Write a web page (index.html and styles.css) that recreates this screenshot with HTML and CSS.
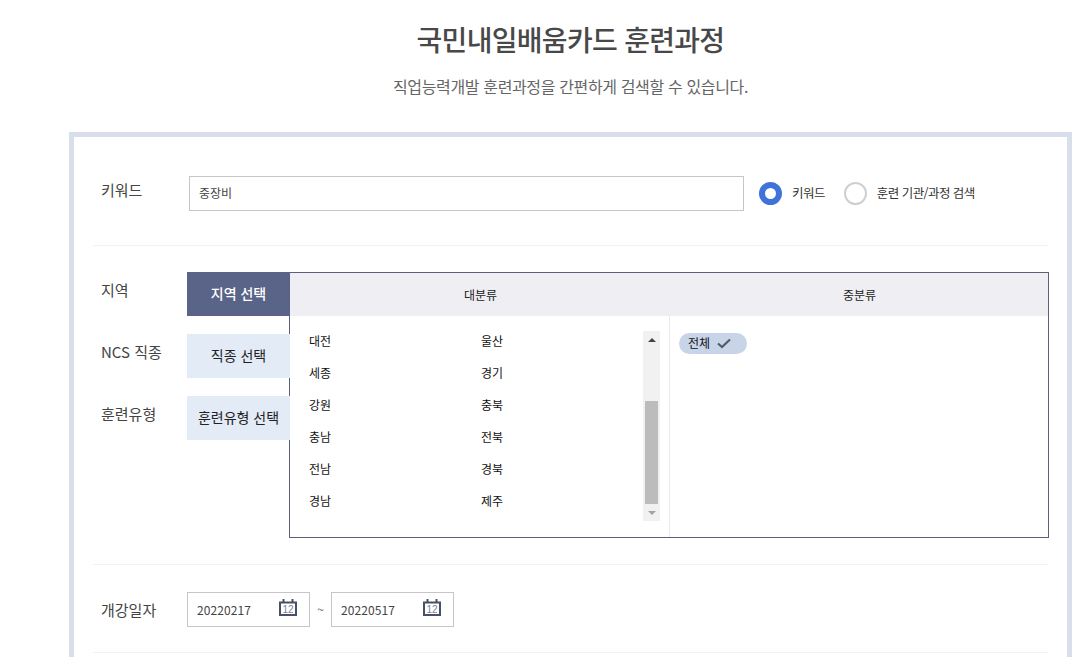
FILE: index.html
```html
<!DOCTYPE html>
<html lang="ko">
<head>
<meta charset="utf-8">
<title>국민내일배움카드 훈련과정</title>
<link rel="stylesheet" href="styles.css">
</head>
<body>
<header class="intro">
  <h1 class="title">국민내일배움카드 훈련과정</h1>
  <p class="subtitle">직업능력개발 훈련과정을 간편하게 검색할 수 있습니다.</p>
</header>
<main class="panel">
  <section class="row row-keyword">
    <div class="label">키워드</div>
    <input class="keyword-input" type="text" value="중장비">
    <div class="radio-group">
      <span class="radio radio-on"></span><span class="radio-text">키워드</span>
      <span class="radio radio-off"></span><span class="radio-text">훈련 기관/과정 검색</span>
    </div>
  </section>
  <section class="row row-select">
    <div class="select-labels">
      <div class="label">지역</div>
      <div class="label">NCS 직종</div>
      <div class="label">훈련유형</div>
    </div>
    <div class="tabs">
      <div class="tab tab-active">지역 선택</div>
      <div class="tab">직종 선택</div>
      <div class="tab">훈련유형 선택</div>
    </div>
    <div class="picker">
      <div class="picker-col picker-main">
        <div class="picker-head">대분류</div>
        <div class="picker-body">
          <ul class="region-list">
            <li>대전</li><li>울산</li>
            <li>세종</li><li>경기</li>
            <li>강원</li><li>충북</li>
            <li>충남</li><li>전북</li>
            <li>전남</li><li>경북</li>
            <li>경남</li><li>제주</li>
          </ul>
          <div class="scrollbar">
            <span class="arrow arrow-up"></span>
            <div class="scroll-track"><div class="scroll-thumb"></div></div>
            <span class="arrow arrow-down"></span>
          </div>
        </div>
      </div>
      <div class="picker-col picker-sub">
        <div class="picker-head">중분류</div>
        <div class="picker-body picker-body-sub">
          <span class="chip"><span class="chip-text">전체</span>
            <svg class="chip-check" width="14" height="11" viewBox="0 0 14 11"><path d="M1 5.5l4 3.5L13 1.5" fill="none" stroke="#555a66" stroke-width="2.2"/></svg>
          </span>
        </div>
      </div>
    </div>
  </section>
  <section class="row row-date">
    <div class="label">개강일자</div>
    <div class="date-field">
      <span class="date-text">20220217</span>
      <svg class="cal" width="18" height="18" viewBox="0 0 18 18"><path d="M4.5 0v3M13.5 0v3" stroke="#4a5064" stroke-width="2"/><path d="M1 3.5h16M1 2.5v13.5h16V2.5" fill="none" stroke="#4a5064" stroke-width="2"/><text x="9" y="13.5" text-anchor="middle" class="cal-num">12</text></svg>
    </div>
    <span class="tilde">~</span>
    <div class="date-field">
      <span class="date-text">20220517</span>
      <svg class="cal" width="18" height="18" viewBox="0 0 18 18"><path d="M4.5 0v3M13.5 0v3" stroke="#4a5064" stroke-width="2"/><path d="M1 3.5h16M1 2.5v13.5h16V2.5" fill="none" stroke="#4a5064" stroke-width="2"/><text x="9" y="13.5" text-anchor="middle" class="cal-num">12</text></svg>
    </div>
  </section>
</main>
</body>
</html>
```
FILE: styles.css
```css
* { box-sizing: border-box; }
html, body { height: 657px; }
body {
  margin: 0;
  background: #fff;
  color: #333;
  font-family: "Noto Sans CJK KR", "Noto Sans", sans-serif;
}
.intro { width: 1003px; height: 132px; margin-left: 69px; padding-top: 19px; text-align: center; }
.title { margin: 0; font-size: 28px; line-height: 40px; font-weight: 500; letter-spacing: -0.7px; color: #484848; }
.subtitle { margin: 16px 0 0; font-size: 16px; line-height: 22px; font-weight: 400; letter-spacing: -0.36px; color: #666; }
.panel {
  width: 1003px;
  height: 525px;
  margin-left: 69px;
  padding: 0 19px;
  border: 5px solid #d8dfea;
  border-bottom: 0;
  background: #fff;
}
.row { display: flex; border-bottom: 1px solid #f3f3f3; }
.label { padding-left: 8px; font-size: 15px; line-height: 22px; color: #444; }
.row-keyword { height: 109px; padding-top: 39px; align-items: flex-start; }
.row-keyword .label { width: 96px; margin-top: 3px; }
.keyword-input {
  width: 555px;
  height: 35px;
  padding: 0 9px 2px;
  border: 1px solid #c6c6c6;
  border-radius: 0;
  outline: none;
  font: 400 12px "Noto Sans CJK KR", sans-serif;
  color: #444;
}
.radio-group { display: flex; align-items: center; height: 35px; margin-left: 15px; }
.radio { width: 23px; height: 23px; border-radius: 50%; background: #fff; }
.radio-on { border: 6px solid #3f73d9; }
.radio-off { border: 2px solid #cfcfcf; margin-left: 19px; }
.radio-text { margin-left: 10px; padding-bottom: 2px; font-size: 12.5px; letter-spacing: -0.55px; color: #333; }
.row-select { height: 319px; padding-top: 26px; }
.select-labels { flex: none; width: 94px; padding-top: 7px; display: flex; flex-direction: column; gap: 40px; }
.tabs { flex: none; width: 102px; display: flex; flex-direction: column; gap: 18px; }
.tab {
  position: relative;
  z-index: 1;
  width: 103px;
  height: 44px;
  background: #e3ebf6;
  color: #222;
  font-size: 14px;
  font-weight: 400;
  line-height: 43px;
  text-align: center;
  white-space: nowrap;
}
.tab-active { background: #596488; color: #fff; font-weight: 500; }
.picker {
  display: flex;
  flex: none;
  width: 760px;
  height: 266px;
  border: 1px solid #5c6078;
}
.picker-col { display: flex; flex-direction: column; }
.picker-main { width: 380px; border-right: 1px solid #e9e9e9; }
.picker-sub { flex: 1; }
.picker-head {
  height: 43px;
  padding-left: 1px;
  background: #efeff3;
  font-size: 12px;
  font-weight: 400;
  line-height: 44px;
  text-align: center;
  color: #222;
}
.picker-main .picker-head { margin-right: -1px; }
.picker-body { display: flex; flex: 1; }
.region-list {
  display: grid;
  grid-template-columns: 172px 100px;
  grid-auto-rows: 32px;
  width: 353px;
  margin: 0;
  padding: 9px 0 0 19px;
  list-style: none;
  font-size: 12px;
  font-weight: 400;
  line-height: 32px;
  color: #111;
}
.scrollbar {
  display: flex;
  flex-direction: column;
  align-items: center;
  width: 17px;
  height: 190px;
  margin-top: 15px;
  background: #f1f1f1;
}
.arrow { flex: none; width: 0; height: 0; border-left: 4px solid transparent; border-right: 4px solid transparent; }
.arrow-up { margin: 7px 0 6px; border-bottom: 4px solid #444; }
.arrow-down { margin: 7px 0 6px; border-top: 4px solid #a3a3a3; }
.scroll-track { flex: 1; width: 13px; display: flex; align-items: flex-end; }
.scroll-thumb { width: 13px; height: 103px; background: #bcbcbc; }
.picker-body-sub { padding: 17px 9px; align-items: flex-start; }
.chip {
  display: inline-flex;
  align-items: center;
  gap: 7px;
  width: 68px;
  height: 21px;
  padding-left: 9px;
  border-radius: 11px;
  background: #c8d4e8;
  font-size: 12px;
  font-weight: 400;
  color: #111;
}
.chip-text { padding-bottom: 2px; }
.row-date { height: 88px; padding-top: 27px; align-items: flex-start; }
.row-date .label { width: 94px; padding-top: 7px; }
.date-field {
  display: flex;
  align-items: center;
  justify-content: space-between;
  width: 123px;
  height: 35px;
  padding: 0 12px 0 9px;
  border: 1px solid #c6c6c6;
}
.date-text { font-size: 12px; letter-spacing: 0.1px; color: #444; }
.cal { flex: none; margin-bottom: 3px; }
.cal-num { font: 400 10px "Liberation Sans", sans-serif; fill: #7a8296; }
.tilde { width: 21px; line-height: 33px; font-size: 12px; text-align: center; color: #666; }
```
